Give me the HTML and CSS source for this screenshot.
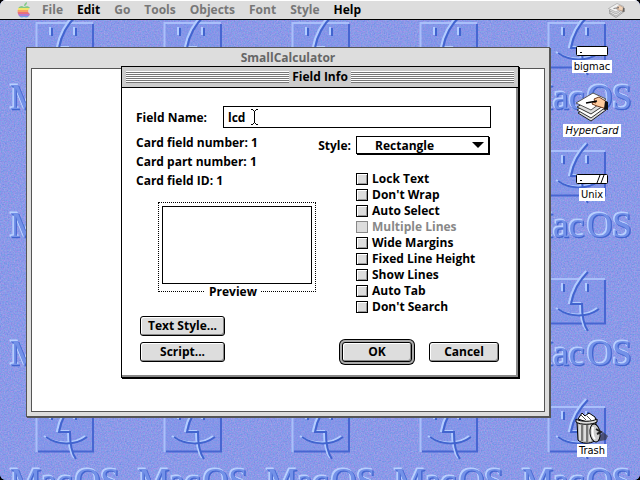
FILE: index.html
```
<!DOCTYPE html>
<html lang="en">

<head>
    <meta charset="utf-8">
    <title>SmallCalculator</title>
    <link rel="stylesheet" href="styles.css">
</head>

<body>
    <div class="desktop">
        <svg class="wallpaper" aria-hidden="true">
            <defs>
                <filter id="grain" x="0" y="0" width="100%" height="100%" color-interpolation-filters="sRGB">
                    <feTurbulence type="fractalNoise" baseFrequency="0.7" numOctaves="2" seed="4" />
                    <feColorMatrix values="0.35 0 0 0 0.37  0 0.2 0 0 0.5  0 0 0.1 0 0.86  0 0 0 0 1" />
                </filter>
                <g id="face" fill="none">
                    <path d="M75 16C66 25 60 37 58 48H69C69 60 70 68 75 75" />
                    <path d="M45 53C56 61 74 62 86 53M51 28V36M75 28V36" />
                </g>
                <g id="word" font-family="Liberation Serif, serif" font-size="35" font-weight="400">
                    <text x="10" y="109">Mac</text>
                    <text x="75" y="109">OS</text>
                </g>
                <pattern id="tile" width="128" height="128" patternUnits="userSpaceOnUse">
                    <rect x="36" y="22" width="57" height="46" fill="#6f8ae6" fill-opacity="0.25" />
                    <path d="M36.500 68V23H93" fill="none" stroke="#a9bffa" stroke-width="2" />
                    <path d="M38 67.500H93V24" fill="none" stroke="#4766d2" stroke-width="2" />
                    <use href="#face" x="-1" y="-1" stroke="#b2ccff" stroke-width="2" />
                    <use href="#face" x="1" stroke="#4164cf" stroke-width="2" />
                    <use href="#word" fill="#b9d0ff" stroke="#b9d0ff" x="-1" y="-1" />
                    <use href="#word" fill="#4164cf" stroke="#4164cf" stroke-width="0.500" x="1" y="1" />
                    <use href="#word" fill="#7391e8" />
                </pattern>
            </defs>
            <rect width="100%" height="100%" filter="url(#grain)" />
            <rect width="100%" height="100%" fill="url(#tile)" />
        </svg>

        <nav class="menubar">
            <button class="menu apple" aria-label="Apple menu">
                <svg width="14" height="16" viewBox="0 0 14 16">
                    <defs>
                        <clipPath id="apple">
                            <path d="M7 5C9 4 12 4 13 6C10 8 11 11 13 12C12 15 10 16 7 15C4 16 2 15 1 12C0 8 1 4 5 4ZM7 4C7 2 8 1 10 0C10 2 9 4 7 4Z" />
                        </clipPath>
                    </defs>
                    <g clip-path="url(#apple)">
                        <path fill="#82c984" d="M0 0H14V6H0z" />
                        <path fill="#f3e36b" d="M0 6H14V8H0z" />
                        <path fill="#f6a266" d="M0 8H14V10H0z" />
                        <path fill="#e9707d" d="M0 10H14V12H0z" />
                        <path fill="#b27ad0" d="M0 12H14V14H0z" />
                        <path fill="#73a5e6" d="M0 14H14V16H0z" />
                    </g>
                </svg>
            </button>
            <button class="menu" disabled>File</button>
            <button class="menu">Edit</button>
            <button class="menu" disabled>Go</button>
            <button class="menu" disabled>Tools</button>
            <button class="menu" disabled>Objects</button>
            <button class="menu" disabled>Font</button>
            <button class="menu" disabled>Style</button>
            <button class="menu">Help</button>
            <button class="menu app-menu" aria-label="Applications">
                <svg width="17" height="15" viewBox="0 0 34 30">
                    <use href="#stack" opacity="0.6" />
                </svg>
            </button>
        </nav>

        <div class="icons">
            <a class="icon" href="#">
                <svg width="32" height="10" viewBox="0 0 32 10">
                    <rect x="0.500" y="0.500" width="31" height="9" rx="1" fill="#fff" stroke="#000" />
                    <path d="M4 6.500H6" stroke="#000" />
                </svg>
                <span>bigmac</span>
            </a>
            <a class="icon hypercard" href="#">
                <svg width="34" height="30" viewBox="0 0 34 30">
                    <g id="stack" stroke-linejoin="round">
                        <path d="M3 21L17 12L31 18L16 29z" fill="#ddd" stroke="#222" />
                        <path d="M2 18L17 9L31 15L16 26z" fill="#fff" stroke="#333" />
                        <path d="M2 15L17 6L31 12L16 22z" fill="#ddd" stroke="#333" />
                        <path d="M1 11L18 1L31 7L16 18z" fill="#fff" stroke="#555" />
                        <path d="M19 7L24 5L32 10V17L22 14L17 12L18 10L21 11z" fill="#ffcb9c" stroke="#703c20" />
                        <path d="M30 9L33 10V18L29 17z" fill="#111" />
                        <path d="M11 11L22 9" stroke="#000" stroke-width="1.500" />
                    </g>
                </svg>
                <span><i>HyperCard</i></span>
            </a>
            <a class="icon" href="#">
                <svg width="32" height="10" viewBox="0 0 32 10">
                    <rect x="0.500" y="0.500" width="31" height="9" rx="1" fill="#fff" stroke="#000" />
                    <path d="M4 6.500H6M21 9L24 1M25 9L28 1" stroke="#000" />
                </svg>
                <span>Unix</span>
            </a>
            <a class="icon trash" href="#">
                <svg width="34" height="32" viewBox="0 0 34 32">
                    <path d="M20 30L31 28L33 24L28 20z" fill="#334" opacity="0.7" />
                    <path d="M3 7L7 1L10 4L14 1L20 5L21 9L12 10z" fill="#fff" stroke="#000" />
                    <path d="M6 3L11 8M12 4L16 8" stroke="#555" />
                    <path d="M2 10L3 28C6 32 16 32 19 29L21 10z" fill="#bbb" stroke="#000" />
                    <path d="M7 13V29M12 13V30" stroke="#777" stroke-width="2" />
                    <path d="M5 13V28M10 13V29M15 13V29" stroke="#fff" />
                    <path d="M1 7C5 10 17 10 22 7V10C17 13 5 13 1 10z" fill="#ddd" stroke="#000" />
                    <ellipse cx="20" cy="21" rx="5" ry="9" fill="#ccc" stroke="#000" transform="rotate(-8 20 21)" />
                    <path d="M18 15C17 21 18 25 20 27" fill="none" stroke="#fff" stroke-width="2" />
                    <path d="M21 17L26 20L22 22" fill="none" stroke="#222" stroke-width="2" />
                </svg>
                <span>Trash</span>
            </a>
        </div>

        <section class="window">
            <h1>SmallCalculator</h1>
            <div class="card"></div>
        </section>

        <form class="dialog" onsubmit="return false;">
            <div class="titlebar">
                <div class="stripes"></div>
                <h2>Field Info</h2>
                <div class="stripes"></div>
            </div>

            <div class="name-row">
                <label for="fieldName">Field Name:</label>
                <div class="name-box">
                    <input type="text" id="fieldName" value="lcd">
                    <svg class="ibeam" width="7" height="16" viewBox="0 0 7 16" shape-rendering="crispEdges">
                        <path d="M0 0h2v1H0zM5 0h2v1H5zM2 1h1v1H2zM4 1h1v1H4zM3 2h1v12H3zM2 14h1v1H2zM4 14h1v1H4zM0 15h2v1H0zM5 15h2v1H5z" />
                    </svg>
                </div>
            </div>

            <div class="columns">
                <div class="details">
                    <p>Card field number: 1</p>
                    <p>Card part number: 1</p>
                    <p>Card field ID: 1</p>
                    <div class="preview">
                        <div class="sample"></div>
                        <span>Preview</span>
                    </div>
                </div>

                <div class="options">
                    <div class="style-row">
                        <label for="style">Style:</label>
                        <div class="popup">
                            <select id="style">
                                <option>Rectangle</option>
                            </select>
                            <svg width="12" height="6" viewBox="0 0 12 6">
                                <path d="M0 0H12L6 6z" />
                            </svg>
                        </div>
                    </div>
                    <label class="check"><input type="checkbox">Lock Text</label>
                    <label class="check"><input type="checkbox">Don't Wrap</label>
                    <label class="check"><input type="checkbox">Auto Select</label>
                    <label class="check off"><input type="checkbox" disabled>Multiple Lines</label>
                    <label class="check"><input type="checkbox">Wide Margins</label>
                    <label class="check"><input type="checkbox">Fixed Line Height</label>
                    <label class="check"><input type="checkbox">Show Lines</label>
                    <label class="check"><input type="checkbox">Auto Tab</label>
                    <label class="check"><input type="checkbox">Don't Search</label>
                </div>
            </div>

            <div class="actions">
                <div class="more">
                    <button type="button" class="push">Text Style...</button>
                    <button type="button" class="push">Script...</button>
                </div>
                <button type="submit" class="push default">OK</button>
                <button type="button" class="push">Cancel</button>
            </div>
        </form>
    </div>
</body>

</html>
```
FILE: styles.css
```
* {
    box-sizing: border-box;
}

html,
body {
    height: 100%;
    margin: 0;
}

body {
    background-color: #000;
    font-family: "Open Sans", sans-serif;
    font-size: 12px;
    font-weight: bold;
    color: #000;
}

button,
input,
select {
    font: inherit;
    color: inherit;
    margin: 0;
    padding: 0;
}

h1,
h2,
p {
    margin: 0;
    font-size: 12px;
}

.desktop {
    position: relative;
    height: 100%;
    overflow: hidden;
    border-radius: 6px;
    background-color: #8c96e6;
}

.wallpaper {
    position: absolute;
    top: 0;
    left: 0;
    width: 100%;
    height: 100%;
}

/* menu bar */
.menubar {
    position: relative;
    display: flex;
    height: 20px;
    padding: 0 8px 0 10px;
    background-color: #ddd;
    border-top: 1px solid #fff;
    border-bottom: 1px solid #000;
}

.menu {
    padding: 0 7px;
    border: none;
    background: none;
    line-height: 18px;
}

.menu:disabled {
    color: #777;
}

.menu svg {
    display: block;
}

.apple {
    padding-right: 4px;
}

.app-menu {
    margin-left: auto;
}

/* desktop icons */
.icons {
    position: absolute;
    top: 46px;
    right: 8px;
    bottom: 23px;
    width: 80px;
    display: flex;
    flex-direction: column;
    align-items: center;
}

.icon {
    display: flex;
    flex-direction: column;
    align-items: center;
    gap: 4px;
    margin-bottom: 19px;
    font-family: "DejaVu Sans Condensed", "DejaVu Sans", sans-serif;
    font-size: 11px;
    font-weight: normal;
    line-height: 13px;
    color: #000;
    text-decoration: none;
}

.icon span {
    padding: 0 2px;
    background-color: #fff;
}

.hypercard {
    gap: 2px;
    margin-bottom: 37px;
}

.trash {
    gap: 0;
    margin-top: auto;
    margin-bottom: 0;
}

/* stack window */
.window {
    position: absolute;
    top: 47px;
    left: 26px;
    right: 90px;
    bottom: 63px;
    display: flex;
    flex-direction: column;
    padding: 0 4px 4px;
    background-color: #ddd;
    border: 1px solid #555;
    box-shadow: 1px 1px 0 #555;
}

.window h1 {
    color: #666;
    line-height: 20px;
    text-align: center;
}

.card {
    flex-grow: 1;
    background-color: #fff;
    border: 1px solid #555;
}

/* field info dialog */
.dialog {
    position: relative;
    width: 398px;
    margin: 46px auto 0;
    padding-bottom: 15px;
    background-color: #fff;
    border: 1px solid #000;
    box-shadow: inset -2px -2px 0 #888, 1px 1px 0 #000;
}

.titlebar {
    display: flex;
    align-items: center;
    gap: 3px;
    height: 21px;
    padding: 0 4px;
    background-color: #ccc;
    border-bottom: 1px solid #000;
}

.titlebar h2 {
    line-height: 20px;
}

.stripes {
    flex: 1;
    height: 12px;
    background: repeating-linear-gradient(#fff 0 1px, #777 1px 2px);
}

.name-row {
    display: flex;
    align-items: center;
    margin: 18px 27px 0 14px;
}

.name-row label {
    width: 87px;
}

.name-box {
    position: relative;
    flex: 1;
}

.name-box input {
    display: block;
    width: 100%;
    height: 22px;
    padding: 0 4px;
    border: 1px solid #000;
    border-radius: 0;
    background-color: #fff;
    outline: none;
}

.ibeam {
    position: absolute;
    top: 3px;
    left: 28px;
}

.columns {
    display: flex;
    justify-content: space-between;
    margin: 5px 28px 0 14px;
}

.details p {
    line-height: 19px;
}

.preview {
    position: relative;
    width: 158px;
    height: 90px;
    margin: 12px 0 0 22px;
    padding: 3px;
    border: 1px dotted #000;
}

.sample {
    width: 150px;
    height: 78px;
    border: 1px solid #000;
}

.preview span {
    position: absolute;
    bottom: -8px;
    left: 46px;
    padding: 0 4px;
    background-color: #fff;
    line-height: 15px;
}

.style-row {
    display: flex;
    align-items: center;
    justify-content: flex-end;
    gap: 5px;
    margin: 3px 0 17px;
}

.popup {
    position: relative;
    width: 134px;
}

.popup select {
    display: block;
    appearance: none;
    width: 133px;
    height: 18px;
    padding-left: 18px;
    border: 1px solid #000;
    border-radius: 0;
    background-color: #fff;
    box-shadow: 1px 1px 0 #000;
}

.popup svg {
    position: absolute;
    top: 6px;
    right: 6px;
    pointer-events: none;
}

.options {
    width: 174px;
}

.check {
    display: flex;
    align-items: center;
    gap: 4px;
    margin-left: 40px;
    line-height: 16px;
}

.check input {
    appearance: none;
    width: 12px;
    height: 12px;
    background-color: #ddd;
    border: 1px solid #000;
    box-shadow: inset 1px 1px 0 #fff, inset -1px -1px 0 #999;
}

.off {
    color: #888;
}

.check.off input {
    border-color: #888;
    box-shadow: none;
}

.actions {
    display: flex;
    align-items: flex-end;
    gap: 17px;
    margin: 1px 19px 0 18px;
}

.more {
    display: flex;
    flex-direction: column;
    gap: 6px;
    width: 85px;
    margin-right: auto;
}

.push {
    min-width: 70px;
    height: 20px;
    border: 1px solid #000;
    border-radius: 3px;
    background-color: #ddd;
    box-shadow: inset 1px 1px 0 #fff, inset -1px -1px 0 #888;
    line-height: 18px;
}

.push:active {
    background-color: #888;
}

.default {
    box-shadow: inset 1px 1px 0 #fff, inset -1px -1px 0 #888, 0 0 0 2px #aaa, 0 0 0 3px #000;
}
```
